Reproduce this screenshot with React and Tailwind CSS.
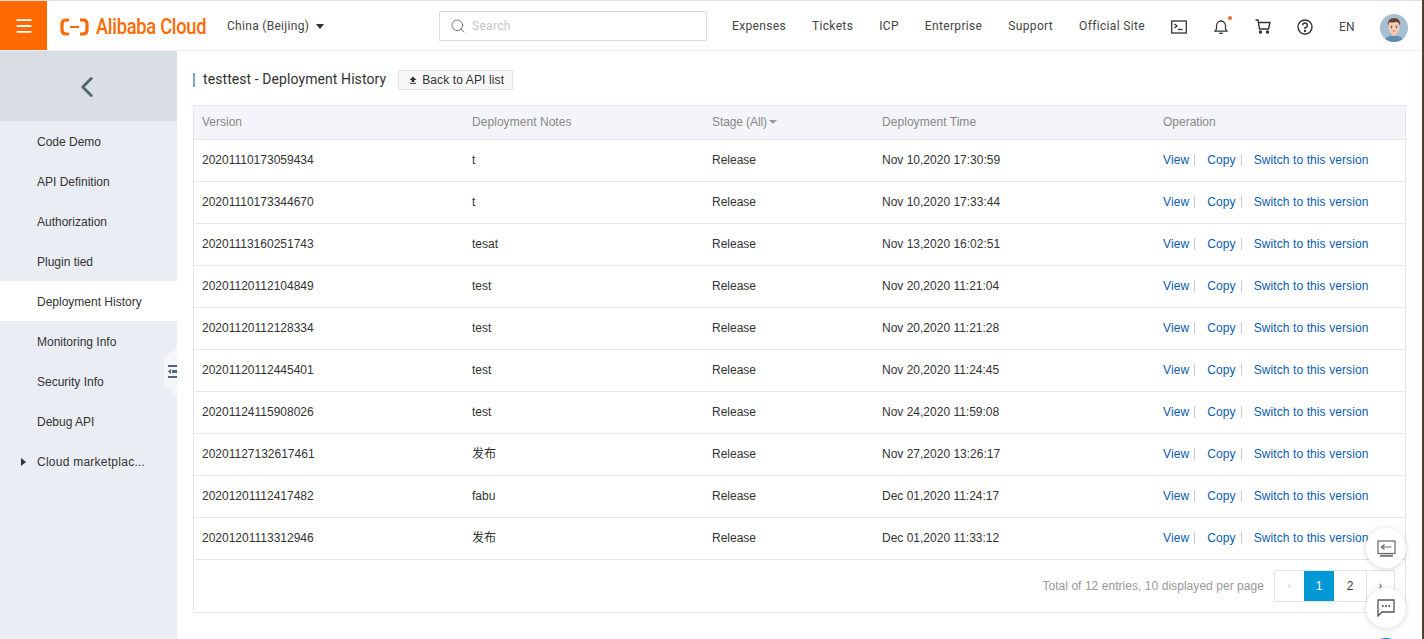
import { ChevronLeft, Menu, Search } from "lucide-react";

const sideItems = [
  "Code Demo",
  "API Definition",
  "Authorization",
  "Plugin tied",
  "Deployment History",
  "Monitoring Info",
  "Security Info",
  "Debug API",
];

const navItems = ["Expenses", "Tickets", "ICP", "Enterprise", "Support", "Official Site"];

const rows = [
  ["20201110173059434", "t", "Nov 10,2020 17:30:59"],
  ["20201110173344670", "t", "Nov 10,2020 17:33:44"],
  ["20201113160251743", "tesat", "Nov 13,2020 16:02:51"],
  ["20201120112104849", "test", "Nov 20,2020 11:21:04"],
  ["20201120112128334", "test", "Nov 20,2020 11:21:28"],
  ["20201120112445401", "test", "Nov 20,2020 11:24:45"],
  ["20201124115908026", "test", "Nov 24,2020 11:59:08"],
  ["20201127132617461", "发布", "Nov 27,2020 13:26:17"],
  ["20201201112417482", "fabu", "Dec 01,2020 11:24:17"],
  ["20201201113312946", "发布", "Dec 01,2020 11:33:12"],
];

const Header = () => {
  return (
    <header className="h-[51px] shrink-0 flex items-center bg-white border-t border-[#e0e0e0] border-b-[#f0f0f0] border-b font-['Roboto',sans-serif] text-[#333]">
      <div className="w-[47px] h-full bg-[#ff6a00] flex items-center justify-center text-white">
        <Menu size={20} strokeWidth={2.2} />
      </div>
      <div className="ml-[13px] mt-[2px] flex items-center w-[167px]">
        <svg width="29" height="18" viewBox="0 0 29 18" fill="none" stroke="#ff6a00" strokeWidth="3.2" className="shrink-0">
          <path d="M9 2 H6 Q2 2 2 6 V12 Q2 16 6 16 H9" />
          <path d="M20 2 H23 Q27 2 27 6 V12 Q27 16 23 16 H20" />
          <path d="M10 9 H19" strokeWidth="2" />
        </svg>
        <span className="ml-[7px] shrink-0 origin-left scale-x-[0.83] text-[#ff6a00] text-[22px] font-medium tracking-[-0.3px] whitespace-nowrap">Alibaba Cloud</span>
      </div>
      <div className="flex items-center w-[212px] mt-[1px] text-[12px] tracking-[0.3px] text-[#444]">
        <span>China (Beijing)</span>
        <span className="ml-[7px] w-0 h-0 border-x-[4.5px] border-x-transparent border-t-[5px] border-t-[#333]" />
      </div>
      <div className="w-[268px] h-[30px] mt-[1px] border border-[#dcdcdc] flex items-center pl-[10px] text-[12px] tracking-[0.3px] text-[#c4c4c4]">
        <Search size={16} className="text-[#777]" strokeWidth={1.5} />
        <span className="ml-[6px]">Search</span>
      </div>
      <nav className="ml-[25px] mt-[1px] flex items-center gap-[26px] text-[12px] tracking-[0.34px] text-[#444]">
        {navItems.map((n) => (
          <span key={n}>{n}</span>
        ))}
      </nav>
      <div className="ml-[26px] mt-[2px] flex items-center text-[#333]">
        <svg width="16" height="14" viewBox="0 0 16 14" fill="none" stroke="#333" strokeWidth="1.3">
          <rect x="0.7" y="1" width="14.6" height="12" />
          <path d="M3.5 4 L6 6 L3.5 8" />
          <path d="M7 9.5 H11.5" />
        </svg>
        <div className="relative ml-[27px] w-[14px] h-[16px]">
          <svg width="14" height="16" viewBox="0 0 15 16" fill="none" stroke="#333" strokeWidth="1.3">
            <path d="M1 12.5 H14 L12.3 10 V6.5 A4.8 4.8 0 0 0 2.7 6.5 V10 Z" />
            <path d="M5.5 14.7 H9.5" />
            <path d="M7.5 0.5 V1.7" />
          </svg>
          <span className="absolute -top-[3px] -right-[4px] w-[4px] h-[4px] rounded-full bg-[#e8702a]" />
        </div>
        <svg className="ml-[27px]" width="16" height="15" viewBox="0 0 16 15" fill="none" stroke="#333" strokeWidth="1.4">
          <path d="M0.5 1 H3 L4.5 10 H13.5 L15 3.5 H3.5" />
          <circle cx="5.5" cy="13" r="1" fill="#333" />
          <circle cx="12.5" cy="13" r="1" fill="#333" />
        </svg>
        <svg className="ml-[26px]" width="16" height="16" viewBox="0 0 16 16" fill="none" stroke="#333" strokeWidth="1.4">
          <circle cx="8" cy="8" r="7" />
          <path d="M5.7 6.2 A2.3 2.3 0 1 1 8 8.6 V10" />
          <circle cx="8" cy="12" r="0.5" fill="#333" />
        </svg>
        <span className="ml-[26px] text-[12px] tracking-[0.3px] text-[#444]">EN</span>
        <svg className="ml-[25px] mt-[2px]" width="28" height="28" viewBox="0 0 28 28">
          <clipPath id="avatar-clip">
            <circle cx="14" cy="14" r="14" />
          </clipPath>
          <g clipPath="url(#avatar-clip)">
            <rect width="28" height="28" fill="#a5c0d1" />
            <path d="M4 28 Q5 22 14 21 Q23 22 24 28Z" fill="#5f8db3" />
            <rect x="11.5" y="17" width="5" height="5" fill="#eebfa3" />
            <ellipse cx="14" cy="13" rx="5.6" ry="7" fill="#f4cdb4" />
            <path d="M8 12 Q7 4 14 4 Q21 4 20 12 Q19 8 16 8 Q12 9 9.5 8 Q8.5 9 8 12Z" fill="#6b4234" />
            <path d="M10.5 12 H12.5 M15.5 12 H17.5" stroke="#4a3028" strokeWidth="0.7" />
            <circle cx="11.5" cy="13.5" r="0.7" fill="#333" />
            <circle cx="16.5" cy="13.5" r="0.7" fill="#333" />
            <path d="M12.5 17 H15.5" stroke="#c0533f" strokeWidth="0.8" />
          </g>
        </svg>
      </div>
    </header>
  );
};

const Sidebar = () => {
  return (
    <aside className="relative w-[177px] shrink-0 bg-[#eaedf3] text-[12px] text-[#333]">
      <div className="h-[70px] bg-[#d9dee4] flex items-center justify-center text-[#546478]">
        <ChevronLeft size={34} strokeWidth={2} className="mr-[3px] mt-[2px]" />
      </div>
      <ul>
        {sideItems.map((s) => (
          <li key={s} className={`h-[40px] flex items-center pl-[37px] pt-[1px] ${s === "Deployment History" ? "bg-white" : ""}`}>
            {s}
          </li>
        ))}
        <li className="relative h-[40px] flex items-center pl-[37px] pt-[1px] tracking-[0.25px]">
          <span className="absolute left-[21px] w-0 h-0 border-y-[4px] border-y-transparent border-l-[5px] border-l-[#333]" />
          Cloud marketplac...
        </li>
      </ul>
      {/* collapse tab */}
      <div className="absolute right-0 top-[296px] w-[13px] h-[49px] bg-[#f5f6fa] [clip-path:polygon(100%_0,100%_100%,0_78%,0_22%)] flex items-center justify-end">
        <svg width="9" height="13" viewBox="0 0 9 13" fill="#546478">
          <rect x="0" y="0" width="9" height="2" />
          <rect x="4" y="5" width="5" height="3" />
          <path d="M0 6.5 L3 4 V9 Z" />
          <rect x="0" y="11" width="9" height="2" />
        </svg>
      </div>
    </aside>
  );
};

const Table = () => {
  return (
    <div className="mt-[15px] border border-[#e3e6ea] text-[12px]">
      <div className="h-[34px] flex items-center pb-[2px] bg-[#f3f5fa] text-[#888] border-b border-[#e3e6ea]">
        <span className="w-[278px] pl-[8px]">Version</span>
        <span className="w-[240px] tracking-[0.05px]">Deployment Notes</span>
        <span className="w-[170px] flex items-center tracking-[-0.1px]">
          Stage (All)
          <span className="ml-[2px] w-0 h-0 border-x-[4px] border-x-transparent border-t-[4px] border-t-[#999]" />
        </span>
        <span className="w-[281px] tracking-[0.05px]">Deployment Time</span>
        <span>Operation</span>
      </div>
      {rows.map((r) => (
        <div key={r[0]} className="h-[42px] flex items-center pb-[1px] text-[#333] border-b border-[#e3e6ea]">
          <span className="w-[278px] pl-[8px]">{r[0]}</span>
          <span className="w-[240px]">{r[1]}</span>
          <span className="w-[170px]">Release</span>
          <span className="w-[281px]">{r[2]}</span>
          <span className="flex items-center text-[#0b5cb0] tracking-[0.1px]">
            <span className="pr-[5px] border-r border-[#ccc] leading-[12px]">View</span>
            <span className="ml-[12px] pr-[5px] border-r border-[#ccc] leading-[12px]">Copy</span>
            <span className="ml-[12px] leading-[12px]">Switch to this version</span>
          </span>
        </div>
      ))}
      <div className="h-[52px] flex items-center justify-end pr-[10px] pb-[1px]">
        <span className="text-[#999] mr-[10px] tracking-[0.05px]">Total of 12 entries, 10 displayed per page</span>
        <div className="flex h-[32px] border border-[#e1e4e8]">
          <span className="w-[29px] flex items-center justify-center text-[10px] text-[#ccc]">‹</span>
          <span className="w-[30px] flex items-center justify-center bg-[#0099d6] text-white">1</span>
          <span className="w-[33px] flex items-center justify-center text-[#333] border-r border-[#e1e4e8]">2</span>
          <span className="w-[27px] flex items-center justify-center text-[10px] text-[#333]">›</span>
        </div>
      </div>
    </div>
  );
};

const FloatButton = ({ className, children }) => {
  return (
    <div className={`absolute right-[18px] w-[40px] h-[40px] rounded-full bg-white shadow-[0_1px_6px_rgba(0,0,0,0.16)] flex items-center justify-center ${className}`}>
      {children}
    </div>
  );
};

export default function App() {
  return (
    <div className="relative h-[639px] w-[1424px] overflow-hidden flex flex-col bg-white font-['Liberation_Sans','Noto_Sans_CJK_SC',sans-serif]">
      <Header />
      <div className="flex flex-1 min-h-0">
        <Sidebar />
        <main className="flex-1 min-w-0 pl-[16px] pr-[18px]">
          <div className="mt-[18px] flex items-center">
            <span className="shrink-0 w-[2px] h-[14px] bg-[#7fa7c6]" />
            <h1 className="ml-[8px] text-[14px] text-[#333] font-['Roboto',sans-serif] tracking-[0.08px]">testtest - Deployment History</h1>
            <span className="ml-[12px] h-[20px] pl-[10px] pr-[8px] flex items-center border border-[#e1e4e8] bg-[#f7f7f7] text-[12px] tracking-[0.12px] text-[#333]">
              <svg width="8" height="8" viewBox="0 0 8 8" fill="#333" className="mr-[5px]">
                <path d="M4 0.5 L7.5 4 H5.3 V6 H2.7 V4 H0.5 Z" />
                <rect x="1" y="6.8" width="6" height="1" />
              </svg>
              Back to API list
            </span>
          </div>
          <Table />
        </main>
      </div>
      <FloatButton className="top-[528px]">
        <svg width="19" height="17" viewBox="0 0 19 17" fill="none" stroke="#666" strokeWidth="1.2">
          <rect x="1" y="1" width="17" height="12.5" />
          <path d="M14.5 7 H4.5 M7.5 4.5 L4.5 7 L7.5 9.5" />
          <path d="M3 15.8 H16" strokeWidth="2" stroke="#777" />
        </svg>
      </FloatButton>
      <FloatButton className="top-[588px]">
        <svg width="18" height="18" viewBox="0 0 18 18" fill="none" stroke="#555" strokeWidth="1.3">
          <path d="M1 1 H17 V13 H5 L1 17 Z" />
          <path d="M5 7 H6.5 M8.2 7 H9.8 M11.5 7 H13" strokeWidth="2" />
        </svg>
      </FloatButton>
      <div className="absolute right-[18px] top-[638px] w-[40px] h-[40px] rounded-full bg-[#1a7fd0]" />
      <div className="absolute right-0 top-0 w-[2px] h-full bg-[#4a4334]" />
    </div>
  );
}
